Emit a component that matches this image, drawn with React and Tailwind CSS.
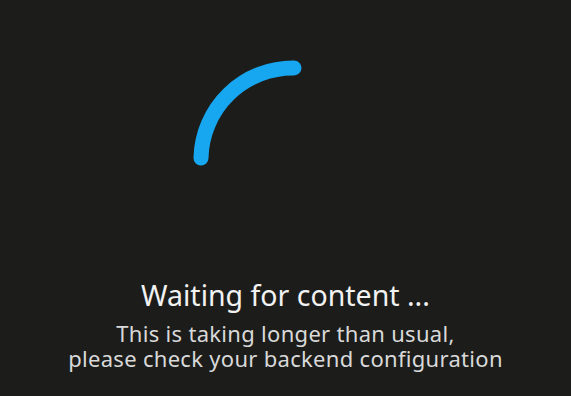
export default function App() {
  return (
    <div className="w-[571px] h-[396px] bg-[#1c1d1b] flex flex-col items-center overflow-hidden" style={{ fontFamily: '"Noto Sans", sans-serif' }}>
      <div className="mt-[60px] ml-[15px] w-[200px] h-[200px]">
        <svg width="200" height="200" viewBox="0 0 200 200">
          <path d="M 8 98 A 92 92 0 0 1 101 8" fill="none" stroke="#17a6f0" strokeWidth="15" strokeLinecap="round" />
        </svg>
      </div>
      <div className="mt-[18px] text-[28.5px] leading-[34px] text-[#f2f2f2] whitespace-nowrap">Waiting for content ...</div>
      <div className="mt-[9px] flex flex-col items-center text-[22px] leading-[25px] text-[#d9d9d9] tracking-[0.3px] whitespace-nowrap">
        <div>This is taking longer than usual,</div>
        <div>please check your backend configuration</div>
      </div>
    </div>
  );
}
